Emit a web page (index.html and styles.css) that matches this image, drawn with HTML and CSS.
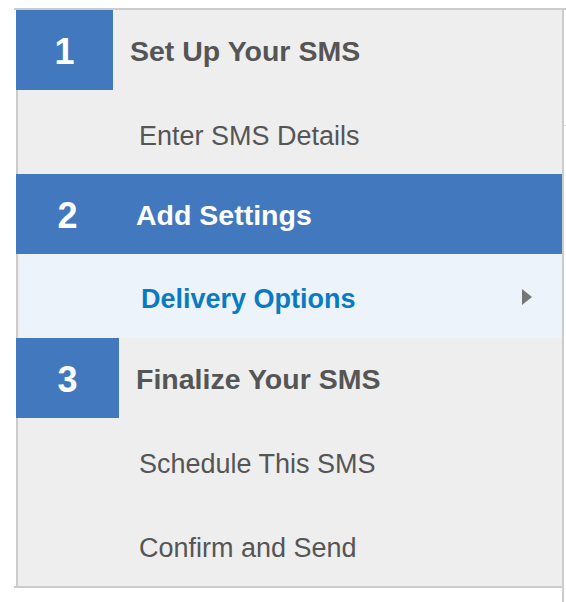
FILE: index.html
```html
<!DOCTYPE html>
<html lang="en">
<head>
<meta charset="utf-8">
<title>SMS Steps</title>
<link rel="stylesheet" href="styles.css">
</head>
<body>
<div class="page">
  <nav class="sidebar">
    <ul class="steps">
      <li class="step-head">
        <span class="num num-narrow">1</span>
        <span class="step-title">Set Up Your SMS</span>
      </li>
      <li class="sub">Enter SMS Details</li>
      <li class="step-head step-active">
        <span class="num">2</span>
        <span class="step-title">Add Settings</span>
      </li>
      <li class="sub sub-active">
        <span>Delivery Options</span>
        <span class="arrow"></span>
      </li>
      <li class="step-head">
        <span class="num">3</span>
        <span class="step-title">Finalize Your SMS</span>
      </li>
      <li class="sub">Schedule This SMS</li>
      <li class="sub">Confirm and Send</li>
    </ul>
  </nav>
  <main class="content">
    <div class="content-head"></div>
  </main>
</div>
</body>
</html>
```

FILE: styles.css
```css
* { box-sizing: border-box; }
html, body { margin: 0; padding: 0; background: #fff; }
body { font-family: "Liberation Sans", Arial, Helvetica, sans-serif; }

.page {
  margin: 8px 0 0 14px;
  height: calc(100vh - 8px);
  border-top: 2px solid #cccccc;
  display: flex;
  align-items: stretch;
}

.sidebar {
  width: 548px;
  flex: none;
  padding-left: 2px;
  border-bottom: 2px solid #cccccc;
  align-self: flex-start;
}

.steps {
  list-style: none;
  margin: 0;
  padding: 0;
  background: #eeeeee;
  border-left: 2px solid #cccccc;
}

.step-head {
  height: 80px;
  display: flex;
  align-items: stretch;
  margin-left: -2px;
  color: #555555;
}
.step-active { background: #4178be; color: #ffffff; }

.num {
  width: 103px;
  flex: none;
  background: #4178be;
  color: #ffffff;
  font-weight: bold;
  font-size: 36px;
  display: flex;
  align-items: center;
  justify-content: center;
  padding-top: 3px;
}
.num-narrow { width: 97px; }

.step-title {
  display: flex;
  align-items: center;
  padding-left: 17px;
  padding-top: 2px;
  font-weight: bold;
  font-size: 28.5px;
}

.sub {
  height: 84px;
  display: flex;
  align-items: center;
  padding: 8px 30px 0 121px;
  font-size: 27px;
  color: #555555;
}
.sub-active {
  margin-left: 2px;
  background: #ecf3fb;
  color: #0a7bc2;
  font-weight: bold;
  justify-content: space-between;
  padding-top: 6px;
}

.arrow {
  width: 0;
  height: 0;
  border-top: 8px solid transparent;
  border-bottom: 8px solid transparent;
  border-left: 10px solid #777777;
  margin-top: -4px;
}

.content {
  flex: 1;
  border-left: 2px solid #cccccc;
}
.content-head {
  height: 116px;
  border-bottom: 1px solid #dddddd;
}
```
